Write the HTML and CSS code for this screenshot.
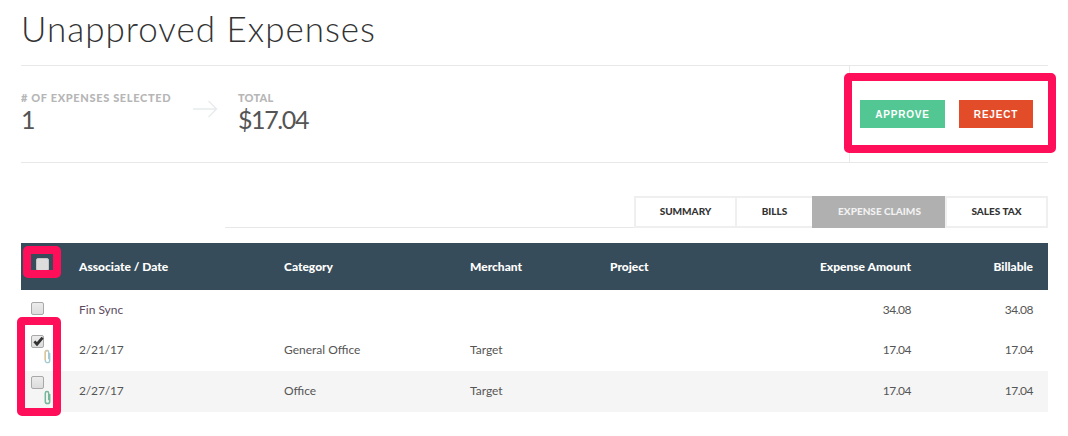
FILE: index.html
```html
<!DOCTYPE html>
<html lang="en">
<head>
<meta charset="utf-8">
<title>Unapproved Expenses</title>
<link rel="stylesheet" href="styles.css">
</head>
<body>
<main class="page">
  <h1 class="title">Unapproved Expenses</h1>
  <section class="summary">
    <div class="stat stat-count">
      <div class="stat-label"># OF EXPENSES SELECTED</div>
      <div class="stat-value">1</div>
    </div>
    <svg class="arrow" width="26" height="18" viewBox="0 0 26 18" aria-hidden="true"><path d="M1 9H24.5M16.5 1l8 8-8 8" fill="none" stroke="#e8ebed" stroke-width="1.4"/></svg>
    <div class="stat stat-total">
      <div class="stat-label">TOTAL</div>
      <div class="stat-value">$17.04</div>
    </div>
    <div class="actions">
      <button class="btn btn-approve">APPROVE</button>
      <button class="btn btn-reject">REJECT</button>
      <div class="mark mark-actions"></div>
    </div>
  </section>
  <nav class="tabs">
    <a class="tab tab-summary">SUMMARY</a>
    <a class="tab tab-bills">BILLS</a>
    <a class="tab tab-claims active">EXPENSE CLAIMS</a>
    <a class="tab tab-tax">SALES TAX</a>
  </nav>
  <section class="table">
    <div class="row head">
      <div class="cell-check head-check"><span class="box"></span></div>
      <div>Associate / Date</div>
      <div>Category</div>
      <div>Merchant</div>
      <div>Project</div>
      <div class="num">Expense Amount</div>
      <div class="num">Billable</div>
      <div class="mark mark-head"></div>
    </div>
    <div class="marked">
      <div class="row body sync">
        <div class="cell-check"><span class="box"></span></div>
        <div class="name">Fin Sync</div>
        <div></div>
        <div></div>
        <div></div>
        <div class="num">34.08</div>
        <div class="num">34.08</div>
      </div>
      <div class="row body">
        <div class="cell-check">
          <span class="box"><svg class="tick" width="11" height="10" viewBox="0 0 11 10" aria-hidden="true"><path d="M1.4 5.4l2.6 2.8 5.6-6.6" fill="none" stroke="#333" stroke-width="2.8"/></svg></span>
          <svg class="clip" width="7" height="15" viewBox="0 0 7 15" aria-hidden="true"><path d="M5.7 4v7.4a2.2 2.2 0 0 1-4.4 0V3.2a1.7 1.7 0 0 1 3.4 0v7" fill="none" stroke="#a3c9d6" stroke-width="1.4"/><path d="M1.3 11V3.2a1.7 1.7 0 0 1 2-1.7" fill="none" stroke="#e3c48f" stroke-width="1.4"/></svg>
        </div>
        <div class="date">2/21/17</div>
        <div>General Office</div>
        <div>Target</div>
        <div></div>
        <div class="num">17.04</div>
        <div class="num">17.04</div>
      </div>
      <div class="row body alt">
        <div class="cell-check">
          <span class="box"></span>
          <svg class="clip" width="7" height="15" viewBox="0 0 7 15" aria-hidden="true"><path d="M5.7 4v7.4a2.2 2.2 0 0 1-4.4 0V3.2a1.7 1.7 0 0 1 3.4 0v7" fill="none" stroke="#74b899" stroke-width="1.5"/></svg>
        </div>
        <div class="date">2/27/17</div>
        <div>Office</div>
        <div>Target</div>
        <div></div>
        <div class="num">17.04</div>
        <div class="num">17.04</div>
      </div>
      <div class="mark mark-rows"></div>
    </div>
  </section>
</main>
</body>
</html>
```
FILE: styles.css
```css
* { box-sizing: border-box; }
html, body { margin: 0; padding: 0; background: #fff; }
body { width: 1068px; height: 436px; overflow: hidden; font-family: Lato, "Liberation Sans", sans-serif; color: #4a4a4a; }
.page { width: 1027px; margin-left: 21px; }

.title { margin: 0; height: 65px; padding-top: 6px; font-size: 35px; line-height: 44px; font-weight: 300; letter-spacing: 1px; color: #333; }

.summary { position: relative; display: flex; align-items: flex-start; height: 98px; border-top: 1px solid #e8e8e8; border-bottom: 1px solid #e8e8e8; }
.stat { padding-top: 25px; }
.stat-count { width: 171px; }
.stat-total { margin-left: 20px; }
.arrow { margin-top: 34px; }
.stat-label { font-size: 11px; line-height: 14px; font-weight: 900; color: #b6b6b6; letter-spacing: 0.65px; white-space: nowrap; }
.stat-total .stat-label { letter-spacing: 0.2px; }
.stat-value { font-size: 25px; line-height: 29px; font-weight: 400; letter-spacing: -1.4px; color: #555; }
.actions { position: relative; display: flex; gap: 14px; align-self: stretch; align-items: flex-start; margin-left: auto; width: 199px; padding: 34px 0 0 10px; border-left: 1px solid #e8e8e8; }
.btn { height: 28px; padding: 0; border: 0; font-family: "Liberation Sans", sans-serif; font-size: 10px; font-weight: 700; letter-spacing: 0.8px; color: #fff; }
.btn-approve { width: 85px; background: #52c793; }
.btn-reject { width: 74px; background: #e24c28; }

.tabs { display: flex; justify-content: flex-end; height: 32px; margin: 33px 0 15px 204px; border-bottom: 1px solid #e8e8e8; }
.tab { display: flex; align-items: center; justify-content: center; height: 32px; padding-bottom: 2px; border: 2px solid #efefef; border-right-width: 0; font-size: 10px; font-weight: 900; color: #333; }
.tab-summary { width: 101px; }
.tab-bills { width: 77px; }
.tab-claims { width: 133px; }
.tab-tax { width: 103px; border-right-width: 2px; }
.tab.active { background: #b0b0b0; border-color: #b0b0b0; color: #f2f2f2; }

.row { position: relative; display: grid; grid-template-columns: 58px 205px 186px 140px 140px 1fr 122px; padding-right: 15px; align-items: center; }
.num { text-align: right; }
.head { height: 47px; background: #374c5a; color: #fff; font-size: 12px; font-weight: 900; }
.body { height: 40px; padding-bottom: 2px; font-size: 12px; color: #555; }
.body + .body { height: 41px; }
.body .num { letter-spacing: -0.5px; }
.date { letter-spacing: -0.15px; }
.alt { background: #f5f5f5; }
.name { color: #5d4a5e; }
.marked { position: relative; }

.cell-check { position: relative; align-self: stretch; padding: 12px 0 0 10px; }
.body + .body .cell-check { padding-top: 5px; }
.head-check { padding: 15px 0 0 15px; }
.box { display: block; position: relative; width: 13px; height: 13px; border: 1px solid #a8a8a8; border-radius: 2px; background: linear-gradient(#ececec, #dcdcdc); }
.head-check .box { background: #dcdcdc; border-color: #c4c4c4; }
.tick { position: absolute; left: 1px; top: 0; }
.clip { position: absolute; left: 23px; top: 19px; }

.mark { position: absolute; border: 8px solid #ff0f5a; border-radius: 5px; pointer-events: none; }
.mark-actions { left: -6px; right: -8px; top: 7px; bottom: 9px; }
.mark-head { left: 2px; top: 3px; width: 38px; height: 32px; }
.mark-rows { left: -4px; top: 27px; width: 44px; height: 99px; }
```
